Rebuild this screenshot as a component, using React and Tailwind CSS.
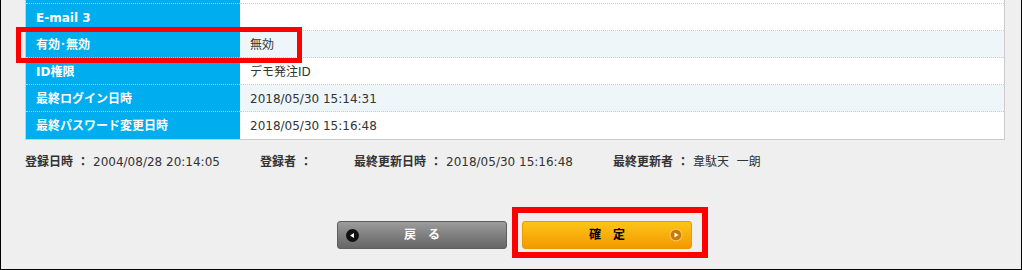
import React from "react";

const rows = [
  { label: "E-mail 3", value: "", alt: false },
  { label: "有効･無効", value: "無効", alt: true },
  { label: "ID権限", value: "デモ発注ID", alt: false },
  { label: "最終ログイン日時", value: "2018/05/30 15:14:31", alt: true },
  { label: "最終パスワード変更日時", value: "2018/05/30 15:16:48", alt: false },
];

const meta = [
  { label: "登録日時", value: "2004/08/28 20:14:05", w: "w-[235px]" },
  { label: "登録者", value: "", w: "w-[94px]" },
  { label: "最終更新日時", value: "2018/05/30 15:16:48", w: "w-[259px]" },
  { label: "最終更新者", value: "韋駄天  一朗", w: "" },
];

const font = { fontFamily: '"DejaVu Sans", "Noto Sans CJK JP", sans-serif' };

const BackIcon = () => (
  <svg width="13" height="13" viewBox="0 0 13 13">
    <circle cx="6.5" cy="6.5" r="6.5" fill="#111" />
    <path d="M4 6.5 L8 4 L8 9 Z" fill="#fff" />
  </svg>
);

const NextIcon = () => (
  <svg width="14" height="14" viewBox="0 0 14 14">
    <circle cx="7" cy="7" r="6.5" fill="#f7c25a" />
    <circle cx="7" cy="7" r="5.3" fill="#c97a06" />
    <path d="M5.5 4.5 L9.5 7 L5.5 9.5 Z" fill="#fff" />
  </svg>
);

export default function App() {
  return (
    <div
      className="relative w-[1022px] h-[270px] bg-[#efefef] border-l border-r border-b border-black overflow-hidden text-[12px] text-[#333]"
      style={font}
    >
      <div className="ml-[24px] w-[980px] border-l border-r border-b border-[#cccccc]">
        <div className="flex h-[4px]">
          <div className="w-[214px] bg-[#00aeef] border-b border-dotted border-[#8fd6f5]"></div>
          <div className="flex-1 bg-white border-b border-dotted border-[#cccccc]"></div>
        </div>
        {rows.map((r, i) => (
          <div key={i} className="flex h-[27px]">
            <div
              className={`w-[214px] bg-[#00aeef] text-white font-bold pl-[10px] pt-[1px] flex items-center ${
                i < rows.length - 1 ? "border-b border-dotted border-[#8fd6f5]" : ""
              }`}
            >
              {r.label}
            </div>
            <div
              className={`flex-1 pl-[10px] pt-[1px] flex items-center ${r.alt ? "bg-[#eef6fa]" : "bg-white"} ${
                i < rows.length - 1 ? "border-b border-dotted border-[#cccccc]" : ""
              }`}
            >
              {r.value}
            </div>
          </div>
        ))}
      </div>

      <div className="flex ml-[24px] mt-[14px] h-[16px] items-center">
        {meta.map((m, i) => (
          <div key={i} className={`flex items-center whitespace-pre ${m.w}`}>
            <span className="font-bold">{m.label}</span>
            <span className="font-bold ml-[4px] mr-[4px]">：</span>
            <span>{m.value}</span>
          </div>
        ))}
      </div>

      <div className="flex ml-[336px] mt-[51px] gap-[15px]">
        <button className="relative w-[170px] h-[28px] rounded-[3px] border border-[#5e5e5e] bg-gradient-to-b from-[#9c9c9c] to-[#656565] text-white font-bold flex items-center justify-center">
          <span className="absolute left-[8px] top-[7px]">
            <BackIcon />
          </span>
          <span>戻　る</span>
        </button>
        <button className="relative w-[170px] h-[28px] rounded-[3px] border border-[#e89a00] bg-gradient-to-b from-[#fcc517] to-[#f39800] text-black font-bold flex items-center justify-center">
          <span>確　定</span>
          <span className="absolute right-[8px] top-[6px]">
            <NextIcon />
          </span>
        </button>
      </div>

      <div className="absolute left-[15px] top-[27px] w-[286px] h-[36px] border-[5px] border-[#ff0000]"></div>
      <div className="absolute left-[511px] top-[207px] w-[196px] h-[51px] border-[6px] border-[#ff0000]"></div>
    </div>
  );
}
